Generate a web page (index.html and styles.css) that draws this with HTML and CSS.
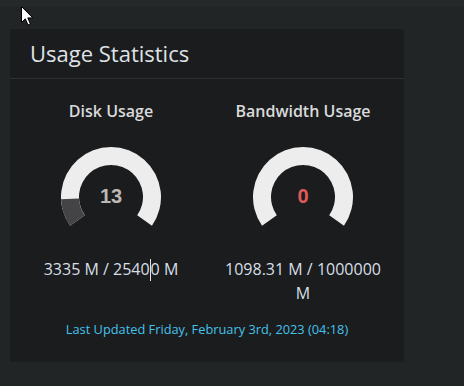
FILE: index.html
```html
<!DOCTYPE html>
<html>
<head>
<meta charset="utf-8">
<link rel="stylesheet" href="styles.css">
</head>
<body>
<div class="topbar"></div>
<div class="page">
  <div class="card">
    <div class="card-header">Usage Statistics</div>
    <div class="card-body">
      <div class="row">
        <div class="col">
          <div class="label">Disk Usage</div>
          <div class="gauge">
            <svg width="100" height="80" viewBox="0 0 100 80">
              <path class="track" d="M9.04 78.68 A50 50 0 1 1 90.96 78.68 L76.21 68.35 A32 32 0 1 0 23.79 68.35 Z"/>
              <path class="fill" d="M9.04 78.68 A50 50 0 0 1 0.05 52.18 L18.03 51.40 A32 32 0 0 0 23.79 68.35 Z"/>
            </svg>
            <span class="gauge-value">13</span>
          </div>
          <div class="amount">3335 M / 2540<span class="caret"></span>0 M</div>
        </div>
        <div class="col">
          <div class="label">Bandwidth Usage</div>
          <div class="gauge">
            <svg width="100" height="80" viewBox="0 0 100 80">
              <path class="track" d="M9.04 78.68 A50 50 0 1 1 90.96 78.68 L76.21 68.35 A32 32 0 1 0 23.79 68.35 Z"/>
            </svg>
            <span class="gauge-value zero">0</span>
          </div>
          <div class="amount">1098.31 M / 1000000 M</div>
        </div>
      </div>
      <div class="updated">Last Updated Friday, February 3rd, 2023 (04:18)</div>
    </div>
  </div>
</div>
<svg class="cursor" width="13" height="20" viewBox="0 0 13 20">
  <path d="M0.5 0.5 L0.5 16.5 L4.3 12.8 L7 19 L9.4 18 L6.8 11.9 L11.8 11.9 Z" fill="#fff" stroke="#000" stroke-width="1" stroke-linejoin="miter"/>
</svg>
</body>
</html>
```

FILE: styles.css
```css
html, body {
  margin: 0;
  padding: 0;
  background: #222526;
  height: 100%;
}
body {
  font-family: "Open Sans", "Noto Sans", sans-serif;
  color: #dcdcdc;
  position: relative;
}
.topbar {
  height: 7px;
  background: #25292a;
}
.page {
  padding: 21px 0 0 9px;
}
.card {
  width: 394px;
  height: 333px;
  background: #1b1c1e;
  border: 1px solid #222425;
  border-radius: 3px;
  display: flex;
  flex-direction: column;
}
.card-header {
  height: 50px;
  border-bottom: 1px solid #2d2f31;
  box-sizing: border-box;
  padding: 10px 0 0 20px;
  font-size: 22px;
  color: #dfe2e6;
  line-height: 28px;
}
.card-body {
  padding: 22px 5px 0 5px;
}
.row {
  display: flex;
}
.col {
  width: 192px;
  box-sizing: border-box;
  padding: 0 15px;
  display: flex;
  flex-direction: column;
  align-items: center;
  text-align: center;
}
.label {
  font-weight: 600;
  font-size: 16px;
  line-height: 20px;
  color: #dadada;
}
.gauge {
  position: relative;
  margin-top: 26px;
  width: 100px;
  height: 80px;
}
.gauge svg {
  display: block;
}
.track { fill: #ededed; }
.fill { fill: #444446; }
.gauge-value {
  position: absolute;
  left: 0;
  right: 0;
  top: 37px;
  text-align: center;
  font-family: "Liberation Sans", Arial, sans-serif;
  font-weight: bold;
  font-size: 20px;
  line-height: 24px;
  color: #bdb8b4;
}
.gauge-value.zero {
  color: #e05a58;
}
.amount {
  margin-top: 30px;
  font-size: 16px;
  line-height: 24px;
  color: #d6dfe6;
}
.caret {
  display: inline-block;
  width: 0;
  height: 22px;
  border-left: 1px solid #e0e0e0;
  vertical-align: -6px;
}
.updated {
  margin-top: 15px;
  text-align: center;
  font-size: 12.8px;
  line-height: 18px;
  color: #45c2ec;
}
.cursor {
  position: absolute;
  left: 21px;
  top: 6px;
}
```
